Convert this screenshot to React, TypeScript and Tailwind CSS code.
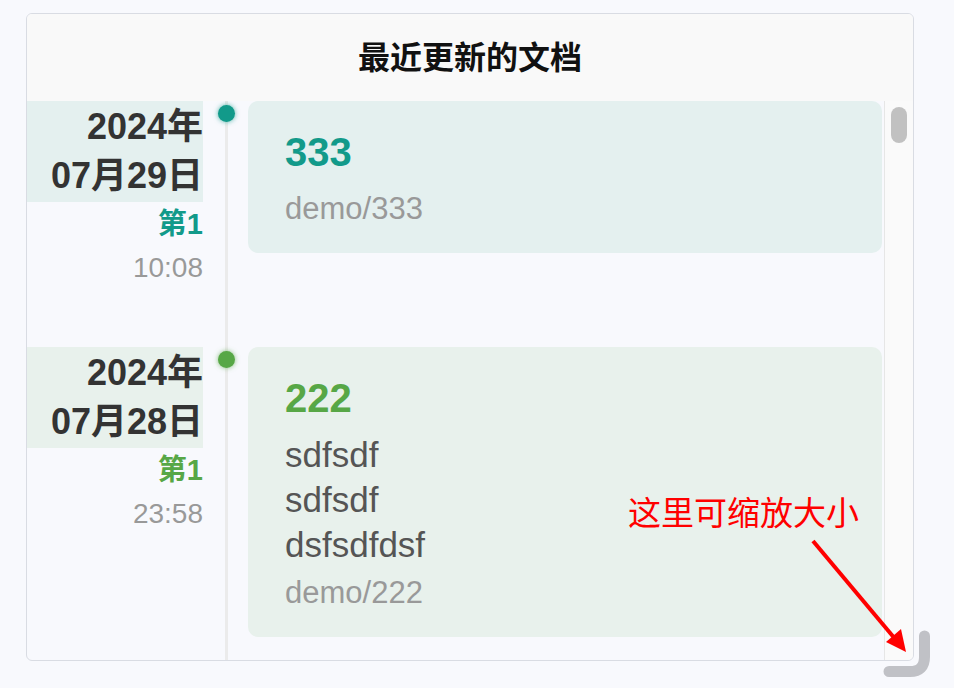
import React from 'react';

type Doc = {
  year: string;
  day: string;
  rank: string;
  time: string;
  title: string;
  lines: string[];
  path: string;
  color: string;
  tint: string;
  dot: string;
};

const docs: Doc[] = [
  {
    year: '2024年',
    day: '07月29日',
    rank: '第1',
    time: '10:08',
    title: '333',
    lines: [],
    path: 'demo/333',
    color: 'text-[#129a8a]',
    tint: 'bg-[#e4f0ef]',
    dot: 'bg-[#129a8a] shadow-[0_0_5px_rgba(18,154,138,0.7)]',
  },
  {
    year: '2024年',
    day: '07月28日',
    rank: '第1',
    time: '23:58',
    title: '222',
    lines: ['sdfsdf', 'sdfsdf', 'dsfsdfdsf'],
    path: 'demo/222',
    color: 'text-[#57a746]',
    tint: 'bg-[#e8f1ec]',
    dot: 'bg-[#57a746] shadow-[0_0_5px_rgba(87,167,70,0.7)]',
  },
];

function Entry({ doc, last }: { doc: Doc; last: boolean }) {
  return (
    <div className="flex">
      <div className="w-[177px] shrink-0 text-right pr-[1px]">
        <div className={`${doc.tint} h-[101px] pt-[1px] text-[36px] leading-[49px] font-bold text-[#333]`}>
          <div>{doc.year}</div>
          <div>{doc.day}</div>
        </div>
        <div className={`text-[29px] leading-[44px] font-bold ${doc.color}`}>{doc.rank}</div>
        <div className="text-[28px] leading-[44px] text-[#999]">{doc.time}</div>
      </div>
      <div className="w-[44px] shrink-0 flex justify-center relative">
        <div className="w-[3px] bg-[#ebebeb]" />
        <div className={`absolute top-[4px] left-[14px] w-[17px] h-[17px] rounded-full ${doc.dot}`} />
      </div>
      <div className="w-[634px] shrink-0">
        <div className={`${doc.tint} rounded-[10px] pl-[37px] pt-[27px] pb-[26px]`}>
          <div className={`text-[40px] leading-[48px] font-bold ${doc.color}`}>{doc.title}</div>
          {doc.lines.length > 0 && (
            <div className="mt-[10px] text-[35px] leading-[45px] text-[#555]">
              {doc.lines.map((l, i) => (
                <div key={i}>{l}</div>
              ))}
            </div>
          )}
          <div className={`${doc.lines.length > 0 ? 'mt-[8px]' : 'mt-[15px]'} text-[31px] leading-[36px] text-[#999]`}>
            {doc.path}
          </div>
        </div>
        <div className={last ? 'h-[60px]' : 'h-[94px]'} />
      </div>
    </div>
  );
}

export default function App() {
  return (
    <div
      className="relative w-[954px] h-[688px] overflow-hidden bg-[#f8f9fd] pt-[13px] pl-[26px]"
      style={{ fontFamily: '"Liberation Sans", "Noto Sans CJK SC", sans-serif' }}
    >
      <div className="w-[888px] h-[648px] border border-[#d9dce3] rounded-[6px] overflow-hidden flex flex-col">
        <div className="h-[87px] shrink-0 bg-[#f9f9f9] flex items-center justify-center text-[32px] font-bold text-[#111]">
          最近更新的文档
        </div>
        <div className="flex-1 flex overflow-hidden">
          <div className="flex-1 flex flex-col">
            {docs.map((d, i) => (
              <Entry key={i} doc={d} last={i === docs.length - 1} />
            ))}
          </div>
          <div className="w-[29px] shrink-0 border-l border-[#e6e6e6] bg-[#fafafa] pl-[6px] pt-[6px]">
            <div className="w-[16px] h-[36px] rounded-full bg-[#c1c1c1]" />
          </div>
        </div>
      </div>

      <div className="absolute left-[628px] top-[494px] text-[33px] leading-[40px] text-[#ff0000]">这里可缩放大小</div>

      <svg className="absolute left-0 top-0" width="954" height="688" viewBox="0 0 954 688">
        <line x1="813" y1="541" x2="896" y2="640" stroke="#ff0000" strokeWidth="4" />
        <polygon points="906,652 886,642 901,629" fill="#ff0000" />
        <path
          d="M924.5 636 V657 Q924.5 671.5 910 671.5 H889"
          fill="none"
          stroke="#c0c1c6"
          strokeWidth="11"
          strokeLinecap="round"
        />
      </svg>
    </div>
  );
}
